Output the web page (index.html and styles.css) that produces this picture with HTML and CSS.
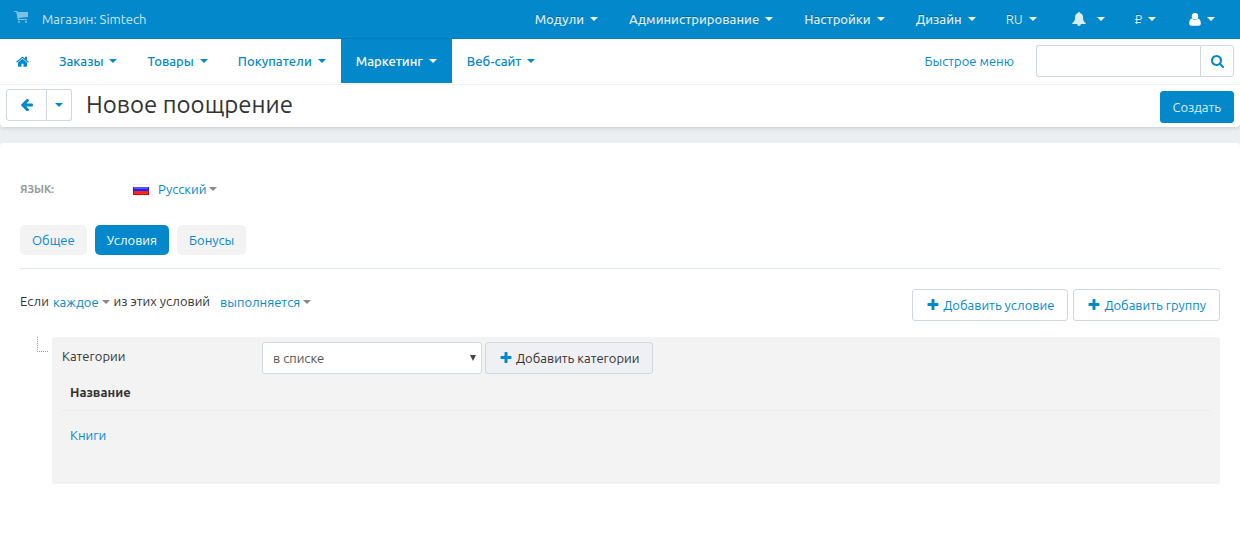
FILE: index.html
```html
<!DOCTYPE html>
<html lang="ru">
<head>
<meta charset="utf-8">
<title>Новое поощрение</title>
<link rel="stylesheet" href="styles.css">
</head>
<body>
<svg class="sprite" aria-hidden="true">
  <symbol id="plus" viewBox="0 0 1792 1792"><path d="M1600 736v192q0 40-28 68t-68 28h-416v416q0 40-28 68t-68 28h-192q-40 0-68-28t-28-68v-416h-416q-40 0-68-28t-28-68v-192q0-40 28-68t68-28h416v-416q0-40 28-68t68-28h192q40 0 68 28t28 68v416h416q40 0 68 28t28 68z"/></symbol>
</svg>
<header class="header">
  <div class="topbar">
    <a href="#" class="store">
      <svg class="icon-cart" viewBox="0 0 14 12"><path d="M0 0h3.200l.6 1H14v5l-9 1 .2 1H13v1H3.900L2.200 1H.4z"/><circle cx="5" cy="10.800" r="1.100"/><circle cx="12" cy="10.800" r="1.100"/></svg>
      <span>Магазин: Simtech</span>
    </a>
    <nav class="topmenu">
      <a href="#" class="menu-item">Модули<i class="caret"></i></a>
      <a href="#" class="menu-item">Администрирование<i class="caret"></i></a>
      <a href="#" class="menu-item">Настройки<i class="caret"></i></a>
      <a href="#" class="menu-item">Дизайн<i class="caret"></i></a>
      <a href="#" class="menu-item regular">RU<i class="caret"></i></a>
      <a href="#" class="menu-item bell" aria-label="Уведомления"><svg class="icon-bell" viewBox="0 0 14 14"><path d="M7 0c.6 0 1 .4 1 1 2.300.5 3 2.500 3 4.500 0 2.800.9 4.500 2.700 5.500v1H.3v-1C2.100 10 3 8.300 3 5.500 3 3.500 3.700 1.500 6 1c0-.6.4-1 1-1zM5.200 12h3.600c0 1.200-.8 2-1.800 2s-1.800-.8-1.800-2z"/></svg><i class="caret"></i></a>
      <a href="#" class="menu-item regular">₽<i class="caret"></i></a>
      <a href="#" class="menu-item user" aria-label="Профиль"><svg class="icon-user" viewBox="0 0 12 13"><circle cx="6" cy="3.300" r="3.200"/><path d="M3 5.600c.8.9 1.800 1.400 3 1.400s2.200-.5 3-1.400c2 .3 2.800 2.400 2.800 5 0 1.400-.9 2.200-2.200 2.200H2.400C1.100 12.800.2 12 .2 10.600c0-2.600.8-4.700 2.800-5z"/></svg><i class="caret"></i></a>
    </nav>
  </div>
  <div class="navbar">
    <nav class="mainmenu">
      <a href="#" class="home" aria-label="Главная"><svg class="icon-home" viewBox="60 200 1672 1340"><path d="M1472 992v480q0 26-19 45t-45 19h-384v-384h-256v384h-384q-26 0-45-19t-19-45v-480q0-1 .5-3t.5-3l575-474 575 474q1 2 1 6zm223-69l-62 74q-8 9-21 11h-3q-13 0-21-7l-692-577-692 577q-12 8-24 7-13-2-21-11l-62-74q-8-10-7-23.500t11-21.500l719-599q32-26 76-26t76 26l244 204v-195q0-14 9-23t23-9h192q14 0 23 9t9 23v408l219 182q10 8 11 21.500t-7 23.500z"/></svg></a>
      <a href="#" class="menu-item">Заказы<i class="caret"></i></a>
      <a href="#" class="menu-item">Товары<i class="caret"></i></a>
      <a href="#" class="menu-item">Покупатели<i class="caret"></i></a>
      <a href="#" class="menu-item active">Маркетинг<i class="caret"></i></a>
      <a href="#" class="menu-item">Веб-сайт<i class="caret"></i></a>
    </nav>
    <div class="tools">
      <a href="#">Быстрое меню</a>
      <form class="search">
        <input type="text" aria-label="Поиск">
        <button type="button" aria-label="Найти"><svg class="icon-search" viewBox="64 128 1664 1664"><path d="M1216 832q0-185-131.500-316.500t-316.500-131.500-316.500 131.500-131.500 316.500 131.500 316.500 316.500 131.500 316.500-131.500 131.500-316.500zm512 832q0 52-38 90t-90 38q-54 0-90-38l-343-342q-179 124-399 124-143 0-273.500-55.500t-225-150-150-225-55.500-273.500 55.500-273.500 150-225 225-150 273.500-55.500 273.500 55.500 225 150 150 225 55.500 273.500q0 220-124 399l343 343q37 37 37 90z"/></svg></button>
      </form>
    </div>
  </div>
  <div class="actions">
    <div class="btn-group">
      <button type="button" class="back" aria-label="Назад"><svg class="icon-back" viewBox="64 200 1600 1500"><path d="M1664 896v128q0 53-32.500 90.500t-84.500 37.500h-704l293 294q38 36 38 90t-38 90l-75 76q-37 37-90 37-52 0-91-37l-651-652q-37-37-37-90 0-52 37-91l651-650q38-38 91-38 52 0 90 38l75 74q38 38 38 91t-38 91l-293 293h704q52 0 84.500 37.500t32.500 90.500z"/></svg></button>
      <button type="button" class="history" aria-label="История"><i class="caret"></i></button>
    </div>
    <h1>Новое поощрение</h1>
    <button type="button" class="btn primary">Создать</button>
  </div>
</header>
<main class="content">
  <div class="language">
    <span class="language-label">ЯЗЫК:</span>
    <svg class="flag" viewBox="0 0 16 11"><path fill="#eee" d="M0 0h16v4H0z"/><path fill="#fff" d="M1 1h14v2H1z"/><path fill="#22e" d="M0 3h16v4H0z"/><path fill="#55f" d="M1 3h14v2H1z"/><path fill="#d00" d="M0 7h16v4H0z"/><path fill="#f22" d="M1 7h14v3H1z"/></svg>
    <button type="button" class="link">Русский<i class="caret"></i></button>
  </div>
  <nav class="tabs">
    <a href="#">Общее</a>
    <a href="#" class="active">Условия</a>
    <a href="#">Бонусы</a>
  </nav>
  <div class="conditions">
    <div class="rule">
      <span>Если</span>
      <button type="button" class="link">каждое<i class="caret"></i></button>
      <span>из этих условий</span>
      <button type="button" class="link result">выполняется<i class="caret"></i></button>
    </div>
    <div class="add-buttons">
      <button type="button" class="btn"><svg class="icon-plus"><use href="#plus"/></svg>Добавить условие</button>
      <button type="button" class="btn"><svg class="icon-plus"><use href="#plus"/></svg>Добавить группу</button>
    </div>
  </div>
  <div class="tree">
    <span class="branch"></span>
    <section class="panel">
      <div class="filter">
        <label for="op">Категории</label>
        <div class="select"><select id="op"><option>в списке</option></select></div>
        <button type="button" class="btn muted"><svg class="icon-plus"><use href="#plus"/></svg>Добавить категории</button>
      </div>
      <table>
        <thead><tr><th>Название</th></tr></thead>
        <tbody><tr><td><a href="#">Книги</a></td></tr></tbody>
      </table>
    </section>
  </div>
</main>
</body>
</html>
```
FILE: styles.css
```css
* { box-sizing: border-box; }

body {
  margin: 0;
  min-height: 100vh;
  display: flex;
  flex-direction: column;
  gap: 16px;
  background: #ebeff2;
  color: #333;
  font: 13px/20px Ubuntu, "Noto Sans", "Open Sans", sans-serif;
}

a { color: #0388cc; text-decoration: none; }
button, input, select { font: inherit; color: inherit; margin: 0; }
button { cursor: pointer; }
svg { display: block; flex: none; fill: currentColor; }
.sprite { position: absolute; width: 0; height: 0; }

.caret {
  flex: none;
  border: 4px solid transparent;
  border-top-color: currentColor;
  border-bottom: 0;
}

.header {
  background: #fff;
  border-radius: 0 0 4px 4px;
  box-shadow: 0 1px 4px rgba(0, 0, 0, 0.16);
}

.topbar {
  display: flex;
  justify-content: space-between;
  height: 39px;
  padding: 0 10px 0 14px;
  background: #0388cc;
  border-bottom: 1px solid #037dbc;
}

.store { display: flex; align-items: center; gap: 14px; color: #cde7f5; }
.icon-cart { width: 14px; height: 12px; margin-bottom: 4px; opacity: 0.6; }

.topmenu, .mainmenu { display: flex; }
.menu-item {
  display: flex;
  align-items: center;
  gap: 6px;
  padding: 0 15px;
  font-weight: 500;
}
.topmenu .menu-item { padding-left: 16px; color: #d9edf7; text-shadow: 0 -1px 0 rgba(0, 0, 0, 0.25); }
.topmenu .caret { border-top-color: #fff; }
.topmenu .regular { padding-left: 15px; font-weight: 400; }
.topmenu .bell { gap: 11px; padding-left: 20px; }
.topmenu .user { color: #fff; padding-left: 18px; }
.icon-bell { width: 14px; height: 14px; }
.icon-user { width: 12px; height: 13px; }

.navbar {
  display: flex;
  justify-content: space-between;
  height: 46px;
  padding-right: 6px;
  border-bottom: 1px solid #f2f2f2;
}
.mainmenu { height: 44px; }
.mainmenu .active { background: #0388cc; color: #fff; }
.home { display: flex; align-items: center; padding: 0 15px 0 16px; }
.icon-home { width: 13px; height: 11px; }

.tools { display: flex; align-items: center; gap: 22px; height: 44px; }
.search { display: flex; height: 32px; }
.search input {
  width: 164px;
  padding: 0 8px;
  border: 1px solid #d0d7df;
  border-right: 0;
  border-radius: 3px 0 0 3px;
}
.search button {
  display: grid;
  place-items: center;
  width: 34px;
  padding: 0;
  background: #fff;
  color: #0388cc;
  border: 1px solid #d0d7df;
  border-radius: 0 3px 3px 0;
}
.icon-search { width: 13px; height: 13px; }

.actions { display: flex; align-items: flex-start; height: 42px; padding: 4px 6px; }
.actions .primary { margin-left: auto; align-self: flex-end; }
.btn-group { display: flex; height: 32px; }
.btn-group button {
  display: grid;
  place-items: center;
  padding: 0;
  background: #fff;
  color: #0388cc;
  border: 1px solid #d0d7df;
}
.btn-group .back { width: 41px; border-radius: 3px 0 0 3px; }
.btn-group .history { width: 25px; border-left: 0; border-radius: 0 3px 3px 0; }
.icon-back { width: 13px; height: 12px; }
h1 { margin: 0 0 0 14px; font-size: 24px; line-height: 32px; font-weight: 400; }

.btn {
  display: flex;
  align-items: center;
  gap: 3px;
  height: 32px;
  padding: 0 13px;
  background: #fff;
  color: #0388cc;
  border: 1px solid #d0d7df;
  border-radius: 3px;
}
.primary { background: #0388cc; border-color: #0388cc; color: #d9edf7; padding: 0 12px; }
.muted { background: #eff0f3; color: #333; }
.icon-plus { width: 14px; height: 14px; color: #0388cc; }

.content {
  flex: 1;
  padding: 36px 20px 20px;
  background: #fff;
  border-radius: 4px 4px 0 0;
}

.link {
  display: flex;
  align-items: center;
  gap: 3px;
  padding: 0;
  border: 0;
  background: none;
  color: #0388cc;
}
.link .caret { border-top-color: #888; }

.language { display: flex; align-items: center; }
.language-label { width: 113px; color: #999; font-size: 11px; font-weight: 700; }
.flag { width: 16px; height: 11px; margin-right: 9px; }

.tabs {
  display: flex;
  gap: 8px;
  margin-top: 26px;
  padding-bottom: 13px;
  border-bottom: 1px solid #e0e6ed;
}
.tabs a { padding: 5px 12px; background: #f3f3f3; border-radius: 5px; }
.tabs .active { background: #0388cc; color: #fff; }

.conditions { display: flex; justify-content: space-between; margin-top: 20px; }
.rule { display: flex; gap: 4px; height: 24px; align-items: center; }
.rule .link { padding-top: 2px; }
.rule .result { margin-left: 6px; }
.add-buttons { display: flex; gap: 5px; }

.tree { display: flex; gap: 4px; margin-top: 16px; padding-left: 17px; }
.branch {
  width: 11px;
  height: 15px;
  border-left: 1px dotted #999;
  border-bottom: 1px dotted #999;
}
.panel { flex: 1; padding: 5px 10px 39px; background: #f3f3f3; border-radius: 3px; }
.filter { display: flex; gap: 3px; }
.filter label { width: 197px; padding-top: 4px; }
.select { position: relative; width: 220px; }
.select::after {
  content: "";
  position: absolute;
  right: 6px;
  top: 13px;
  border: 3px solid transparent;
  border-top: 6px solid #444;
  border-bottom: 0;
}
.select select {
  width: 100%;
  height: 32px;
  padding: 0 10px;
  appearance: none;
  background: #fff;
  color: #555;
  border: 1px solid #d0d7df;
  border-radius: 3px;
}

table { width: 100%; border-collapse: collapse; }
th { padding: 8px; text-align: left; border-bottom: 1px solid #ebebeb; }
td { padding: 14px 8px 0; }
```
